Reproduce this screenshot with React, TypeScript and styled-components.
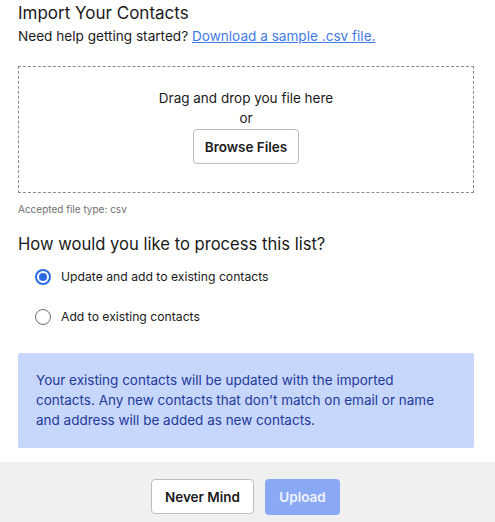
import React, { useState } from "react";
import styled, { createGlobalStyle } from "styled-components";

const Global = createGlobalStyle`
  html, body { margin: 0; padding: 0; background: #ffffff; }
  body { font-family: Inter, "Noto Sans", sans-serif; color: #1a1a1a; }
  * { box-sizing: border-box; }
`;

const Page = styled.div`
  width: 495px;
  height: 522px;
  display: flex;
  flex-direction: column;
  overflow: hidden;
`;

const Body = styled.div`
  flex: 1;
  padding: 2px 21px 0 18px;
  display: flex;
  flex-direction: column;
`;

const Title = styled.h1`
  margin: 0;
  font-size: 17px;
  font-weight: 400;
  line-height: 22px;
  color: #1a1a1a;
`;

const Sub = styled.p`
  margin: 2px 0 0;
  font-size: 13.6px;
  line-height: 20px;
`;

const Link = styled.a`
  color: #3f7ae6;
  text-decoration: underline;
  cursor: pointer;
`;

const Drop = styled.div`
  margin-top: 20px;
  height: 127px;
  border: 1px dashed #8a8a8a;
  display: flex;
  flex-direction: column;
  align-items: center;
  padding-top: 21px;
`;

const DropText = styled.div`
  font-size: 13.5px;
  line-height: 20px;
`;

const OutlineButton = styled.button<{ $w: number }>`
  width: ${(p) => p.$w}px;
  height: 35px;
  background: #fff;
  border: 1px solid #bdbdbd;
  border-radius: 4px;
  font-family: inherit;
  font-size: 13.5px;
  font-weight: 600;
  color: #1a1a1a;
  cursor: pointer;
`;

const BrowseWrap = styled.div`
  margin-top: 1px;
`;

const Hint = styled.div`
  margin-top: 9px;
  font-size: 10px;
  line-height: 14px;
  color: #707070;
`;

const Question = styled.h2`
  margin: 17px 0 0;
  font-size: 16.6px;
  font-weight: 400;
  line-height: 22px;
`;

const Options = styled.div`
  margin-top: 12px;
  padding-left: 17px;
  display: flex;
  flex-direction: column;
  gap: 20px;
`;

const Option = styled.label`
  display: flex;
  align-items: center;
  gap: 10px;
  font-size: 12.2px;
  line-height: 20px;
  cursor: pointer;
`;

const Circle = styled.span<{ $on: boolean }>`
  width: 16px;
  height: 16px;
  border-radius: 50%;
  border: ${(p) => (p.$on ? "2px solid #2d6be6" : "1.5px solid #6e6e6e")};
  display: flex;
  align-items: center;
  justify-content: center;
  &::after {
    content: "";
    width: 8px;
    height: 8px;
    border-radius: 50%;
    background: ${(p) => (p.$on ? "#2d6be6" : "transparent")};
  }
`;

const Info = styled.div`
  margin-top: 26px;
  background: #c6d6fc;
  border-radius: 2px;
  padding: 17px 18px 18px;
  font-size: 13.5px;
  line-height: 20px;
  color: #1f3a9a;
`;

const Footer = styled.div`
  height: 60px;
  background: #f0f0f0;
  display: flex;
  justify-content: center;
  align-items: flex-start;
  padding-top: 17px;
  gap: 11px;
  padding-right: 4px;
`;

const PrimaryButton = styled.button`
  width: 75px;
  height: 36px;
  border: none;
  border-radius: 4px;
  background: #8aa9f5;
  color: #eef2ff;
  font-family: inherit;
  font-size: 13.5px;
  font-weight: 600;
`;

export default function App() {
  const [choice, setChoice] = useState(0);
  const opts = ["Update and add to existing contacts", "Add to existing contacts"];
  return (
    <Page>
      <Global />
      <Body>
        <Title>Import Your Contacts</Title>
        <Sub>
          Need help getting started? <Link>Download a sample .csv file.</Link>
        </Sub>
        <Drop>
          <DropText>Drag and drop you file here</DropText>
          <DropText>or</DropText>
          <BrowseWrap>
            <OutlineButton $w={106}>Browse Files</OutlineButton>
          </BrowseWrap>
        </Drop>
        <Hint>Accepted file type: csv</Hint>
        <Question>How would you like to process this list?</Question>
        <Options>
          {opts.map((o, i) => (
            <Option key={o} onClick={() => setChoice(i)}>
              <Circle $on={choice === i} />
              {o}
            </Option>
          ))}
        </Options>
        <Info>
          Your existing contacts will be updated with the imported contacts. Any new contacts that
          don't match on email or name and address will be added as new contacts.
        </Info>
      </Body>
      <Footer>
        <OutlineButton $w={103}>Never Mind</OutlineButton>
        <PrimaryButton disabled>Upload</PrimaryButton>
      </Footer>
    </Page>
  );
}
